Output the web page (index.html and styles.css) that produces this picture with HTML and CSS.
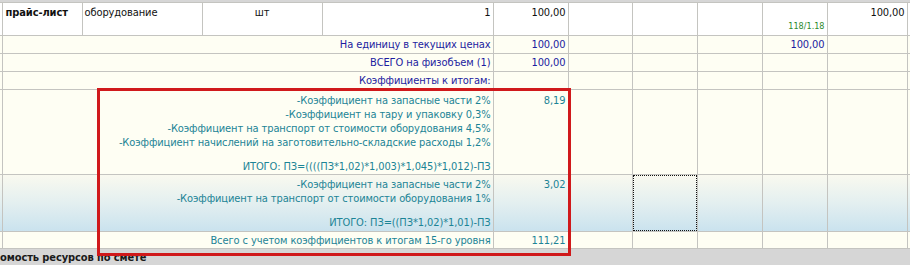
FILE: index.html
```html
<!DOCTYPE html>
<html lang="ru">
<head>
<meta charset="utf-8">
<link rel="stylesheet" href="styles.css">
</head>
<body>
<div class="page">
  <table class="grid">
    <colgroup>
      <col class="w0"><col class="w1"><col class="w2"><col class="w3"><col class="w4"><col class="w5"><col class="w6"><col class="w7"><col class="w8"><col class="w9"><col class="w10"><col class="w11">
    </colgroup>
    <tr class="r-item">
      <td></td>
      <td class="bold">прайс-лист</td>
      <td>оборудование</td>
      <td class="center">шт</td>
      <td class="right">1</td>
      <td class="right">100,00</td>
      <td></td><td></td><td></td>
      <td class="right bottom"><span class="note">118/1.18</span></td>
      <td class="right">100,00</td>
      <td></td>
    </tr>
    <tr class="r-sum">
      <td></td>
      <td colspan="4" class="right blue">На единицу в текущих ценах</td>
      <td class="right blue">100,00</td>
      <td></td><td></td><td></td>
      <td class="right blue">100,00</td>
      <td></td><td></td>
    </tr>
    <tr class="r-sum">
      <td></td>
      <td colspan="4" class="right blue">ВСЕГО на физобъем (1)</td>
      <td class="right blue">100,00</td>
      <td></td><td></td><td></td><td></td><td></td><td></td>
    </tr>
    <tr class="r-sum">
      <td></td>
      <td colspan="4" class="right blue">Коэффициенты к итогам:</td>
      <td></td>
      <td></td><td></td><td></td><td></td><td></td><td></td>
    </tr>
    <tr class="r-coef1">
      <td></td>
      <td colspan="4" class="right teal top">
        <div>-Коэффициент на запасные части 2%</div>
        <div>-Коэффициент на тару и упаковку 0,3%</div>
        <div>-Коэффициент на транспорт от стоимости оборудования 4,5%</div>
        <div>-Коэффициент начислений на заготовительно-складские расходы 1,2%</div>
        <div class="total">ИТОГО: ПЗ=((((ПЗ*1,02)*1,003)*1,045)*1,012)-ПЗ</div>
      </td>
      <td class="right teal top">8,19</td>
      <td></td><td></td><td></td><td></td><td></td><td></td>
    </tr>
    <tr class="r-coef2">
      <td></td>
      <td colspan="4" class="right teal top">
        <div>-Коэффициент на запасные части 2%</div>
        <div>-Коэффициент на транспорт от стоимости оборудования 1%</div>
        <div class="total total-2">ИТОГО: ПЗ=((ПЗ*1,02)*1,01)-ПЗ</div>
      </td>
      <td class="right teal top">3,02</td>
      <td></td>
      <td class="focus-cell"><div class="focus"></div></td>
      <td></td><td></td><td></td><td></td>
    </tr>
    <tr class="r-grand">
      <td></td>
      <td colspan="4" class="right teal">Всего с учетом коэффициентов к итогам 15-го уровня</td>
      <td class="right teal">111,21</td>
      <td></td><td></td><td></td><td></td><td></td><td></td>
    </tr>
  </table>
  <div class="section">омость ресурсов по смете</div>
  <div class="highlight"></div>
</div>
</body>
</html>
```

FILE: styles.css
```css
html, body {
  margin: 0;
  padding: 0;
  background: #d6d6d6;
}
.page {
  position: relative;
  width: 910px;
  height: 265px;
  overflow: hidden;
  background: #d6d6d6;
  font-family: "DejaVu Sans Condensed", "Liberation Sans", sans-serif;
  font-size: 11px;
  letter-spacing: -0.1px;
  color: #111;
}
.grid {
  border-collapse: collapse;
  table-layout: fixed;
  width: 910px;
  margin-top: 2px;
  background: #fefef3;
}
.grid td {
  border: 1px solid #c4c4c0;
  padding: 0 2px;
  line-height: 14px;
  white-space: nowrap;
  overflow: hidden;
  vertical-align: middle;
}
.grid td:first-child { padding: 0; border-left: none; }
.grid td:last-child { padding: 0; border-right: none; }
.w0 { width: 2px; }
.w1 { width: 80px; }
.w2 { width: 120px; }
.w3 { width: 120px; }
.w4 { width: 171px; }
.w5 { width: 75px; }
.w6 { width: 64px; }
.w7 { width: 65px; }
.w8 { width: 65px; }
.w9 { width: 65px; }
.w10 { width: 80px; }
.w11 { width: 3px; }

.r-item { height: 33px; background: #ffffff; }
.r-item td { vertical-align: top; padding-top: 3px; }
.r-item td.bottom { vertical-align: bottom; padding-bottom: 2px; }
.r-sum { height: 18px; }
.r-sum td { padding-top: 1px; }
.r-coef1 { height: 84px; }
.r-coef2 {
  height: 57px;
  background: linear-gradient(to bottom, #f9f9ef 0%, #e3eff0 50%, #c9e2ee 100%);
}
.r-grand { height: 17px; }
.r-grand td { padding-top: 2px; }
.r-coef1 td.top { vertical-align: top; padding-top: 4px; }
.r-coef2 td.top { vertical-align: top; padding-top: 3px; }
.total { margin-top: 10px; }
.total-2 { margin-top: 10px; }

.bold { font-weight: bold; padding-left: 3px !important; }
.right { text-align: right; }
.center { text-align: center; }
.blue { color: #1c1ca0; }
.teal { color: #1c8496; }
.note { color: #2d8a2d; font-size: 9px; letter-spacing: 0; }

.focus-cell { position: relative; }
.focus {
  position: absolute;
  left: 0;
  top: 0;
  right: 0;
  bottom: 0;
  border: 1px dotted #111;
}

.section {
  height: 17px;
  line-height: 18px;
  font-weight: bold;
  color: #1a1a1a;
  background: #d6d6d6;
  white-space: nowrap;
}

.highlight {
  position: absolute;
  left: 97px;
  top: 88px;
  width: 474px;
  height: 168px;
  box-sizing: border-box;
  border: 3px solid #d0191b;
}
```
